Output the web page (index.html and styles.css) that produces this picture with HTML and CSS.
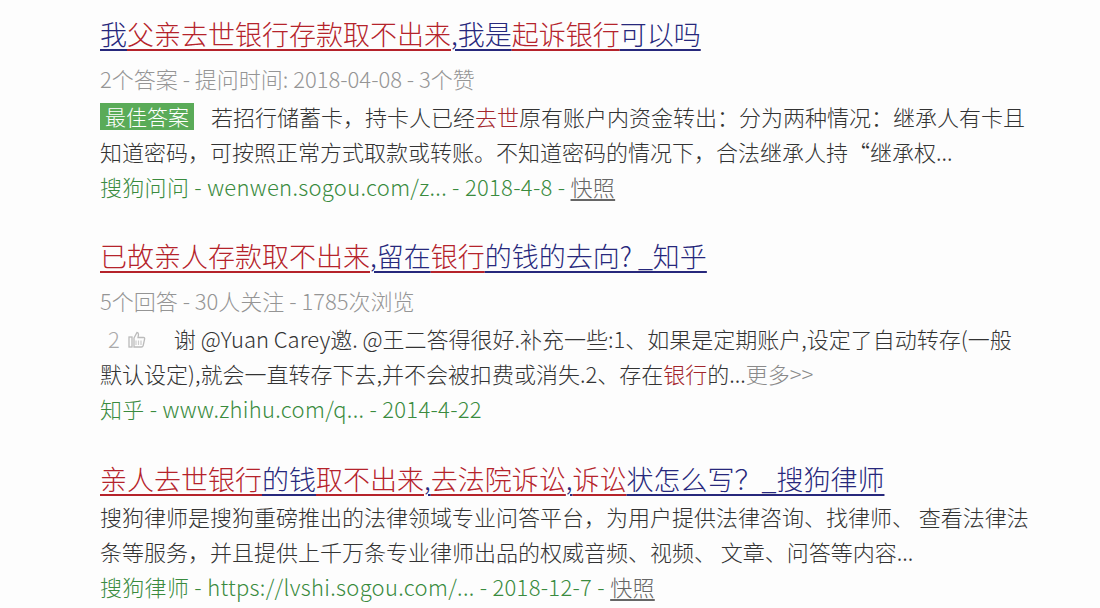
FILE: index.html
```html
<!DOCTYPE html>
<html lang="zh-CN">
<head>
<meta charset="utf-8">
<title>搜索结果</title>
<link rel="stylesheet" href="styles.css">
</head>
<body>
<div class="results">
  <div class="result">
    <div class="title"><span class="b">我</span><span class="r">父亲去世银行存款取不出来</span><span class="b">,我是</span><span class="r">起诉银行</span><span class="b">可以吗</span></div>
    <div class="meta">2个答案 - 提问时间: 2018-04-08 - 3个赞</div>
    <div class="body">
      <div class="line"><span class="badge">最佳答案</span>若招行储蓄卡，持卡人已经<span class="hl">去世</span>原有账户内资金转出：分为两种情况：继承人有卡且</div>
      <div class="line">知道密码，可按照正常方式取款或转账。不知道密码的情况下，合法继承人持“继承权...</div>
    </div>
    <div class="source">搜狗问问 - wenwen.sogou.com/z... - 2018-4-8 - <span class="snap">快照</span></div>
  </div>

  <div class="result">
    <div class="title"><span class="r">已故亲人存款取不出来</span><span class="b">,留在</span><span class="r">银行</span><span class="b">的钱的去向? _知乎</span></div>
    <div class="meta">5个回答 - 30人关注 - 1785次浏览</div>
    <div class="body">
      <div class="line"><span class="vote">2<svg class="thumb" viewBox="0 0 18 18" width="18" height="18"><rect x="1" y="7" width="3" height="10" fill="none" stroke="#bbb" stroke-width="1.3"/><path d="M6 8 L9 2.5 Q10.5 2.5 10.5 4.5 L10 7.5 L15.5 7.5 Q17 7.5 16.6 9 L15.2 15.5 Q14.8 17 13.4 17 L6 17 Z" fill="none" stroke="#bbb" stroke-width="1.3"/><path d="M8 10.5v4.5M10.5 10.5v4.5M13 10.5v4.5" stroke="#ccc" stroke-width="1.2"/></svg></span>谢 @Yuan Carey邀. @王二答得很好.补充一些:1、如果是定期账户,设定了自动转存(一般</div>
      <div class="line">默认设定),就会一直转存下去,并不会被扣费或消失.2、存在<span class="hl">银行</span>的...<span class="more">更多&gt;&gt;</span></div>
    </div>
    <div class="source">知乎 - www.zhihu.com/q... - 2014-4-22</div>
  </div>

  <div class="result">
    <div class="title tight"><span class="r">亲人去世银行</span><span class="b">的钱</span><span class="r">取不出来</span><span class="b">,</span><span class="r">去法院诉讼</span><span class="b">,</span><span class="r">诉讼</span><span class="b">状怎么写？_搜狗律师</span></div>
    <div class="body">
      <div class="line">搜狗律师是搜狗重磅推出的法律领域专业问答平台，为用户提供法律咨询、找律师、 查看法律法</div>
      <div class="line">条等服务，并且提供上千万条专业律师出品的权威音频、视频、 文章、问答等内容...</div>
    </div>
    <div class="source">搜狗律师 - https://lvshi.sogou.com/... - 2018-12-7 - <span class="snap">快照</span></div>
  </div>
</div>
</body>
</html>
```

FILE: styles.css
```css
html, body {
  margin: 0;
  padding: 0;
  background: #fdfdfd;
}
body {
  width: 1100px;
  height: 608px;
  overflow: hidden;
  font-family: "Noto Sans CJK SC", "Noto Sans", "Liberation Sans", sans-serif;
  font-weight: 300;
  color: #333;
}
.results {
  display: flex;
  flex-direction: column;
  gap: 33px;
  padding: 15px 0 0 100px;
}
.result {
  display: flex;
  flex-direction: column;
}
.title {
  font-size: 27px;
  line-height: 38px;
  height: 38px;
  padding-bottom: 4px;
  white-space: nowrap;
}
.title.tight {
  line-height: 40px;
  height: 40px;
  padding-bottom: 0;
}
.title span {
  text-decoration: underline;
  text-underline-offset: 4px;
  text-decoration-thickness: 1.5px;
}
.r { color: #b5232b; }
.b { color: #27287c; }
.meta {
  font-size: 22px;
  line-height: 42px;
  color: #959595;
  white-space: nowrap;
}
.body {
  font-size: 22px;
  line-height: 35px;
  color: #333;
}
.line {
  white-space: nowrap;
  display: flex;
  align-items: center;
}
.badge {
  display: inline-block;
  background: #5aab58;
  color: #fff;
  font-size: 21px;
  line-height: 27px;
  height: 27px;
  padding: 0 5px;
  margin-right: 17px;
}
.hl { color: #a3262c; }
.more { color: #8a8a8a; }
.vote {
  display: inline-flex;
  align-items: center;
  color: #aaa;
  padding-left: 8px;
  margin-right: 28px;
  gap: 8px;
}
.thumb {
  display: block;
}
.source {
  font-size: 22px;
  line-height: 35px;
  color: #3a8b3e;
  letter-spacing: 0.3px;
  white-space: nowrap;
}
.snap {
  color: #666;
  text-decoration: underline;
  text-underline-offset: 3px;
}
```
